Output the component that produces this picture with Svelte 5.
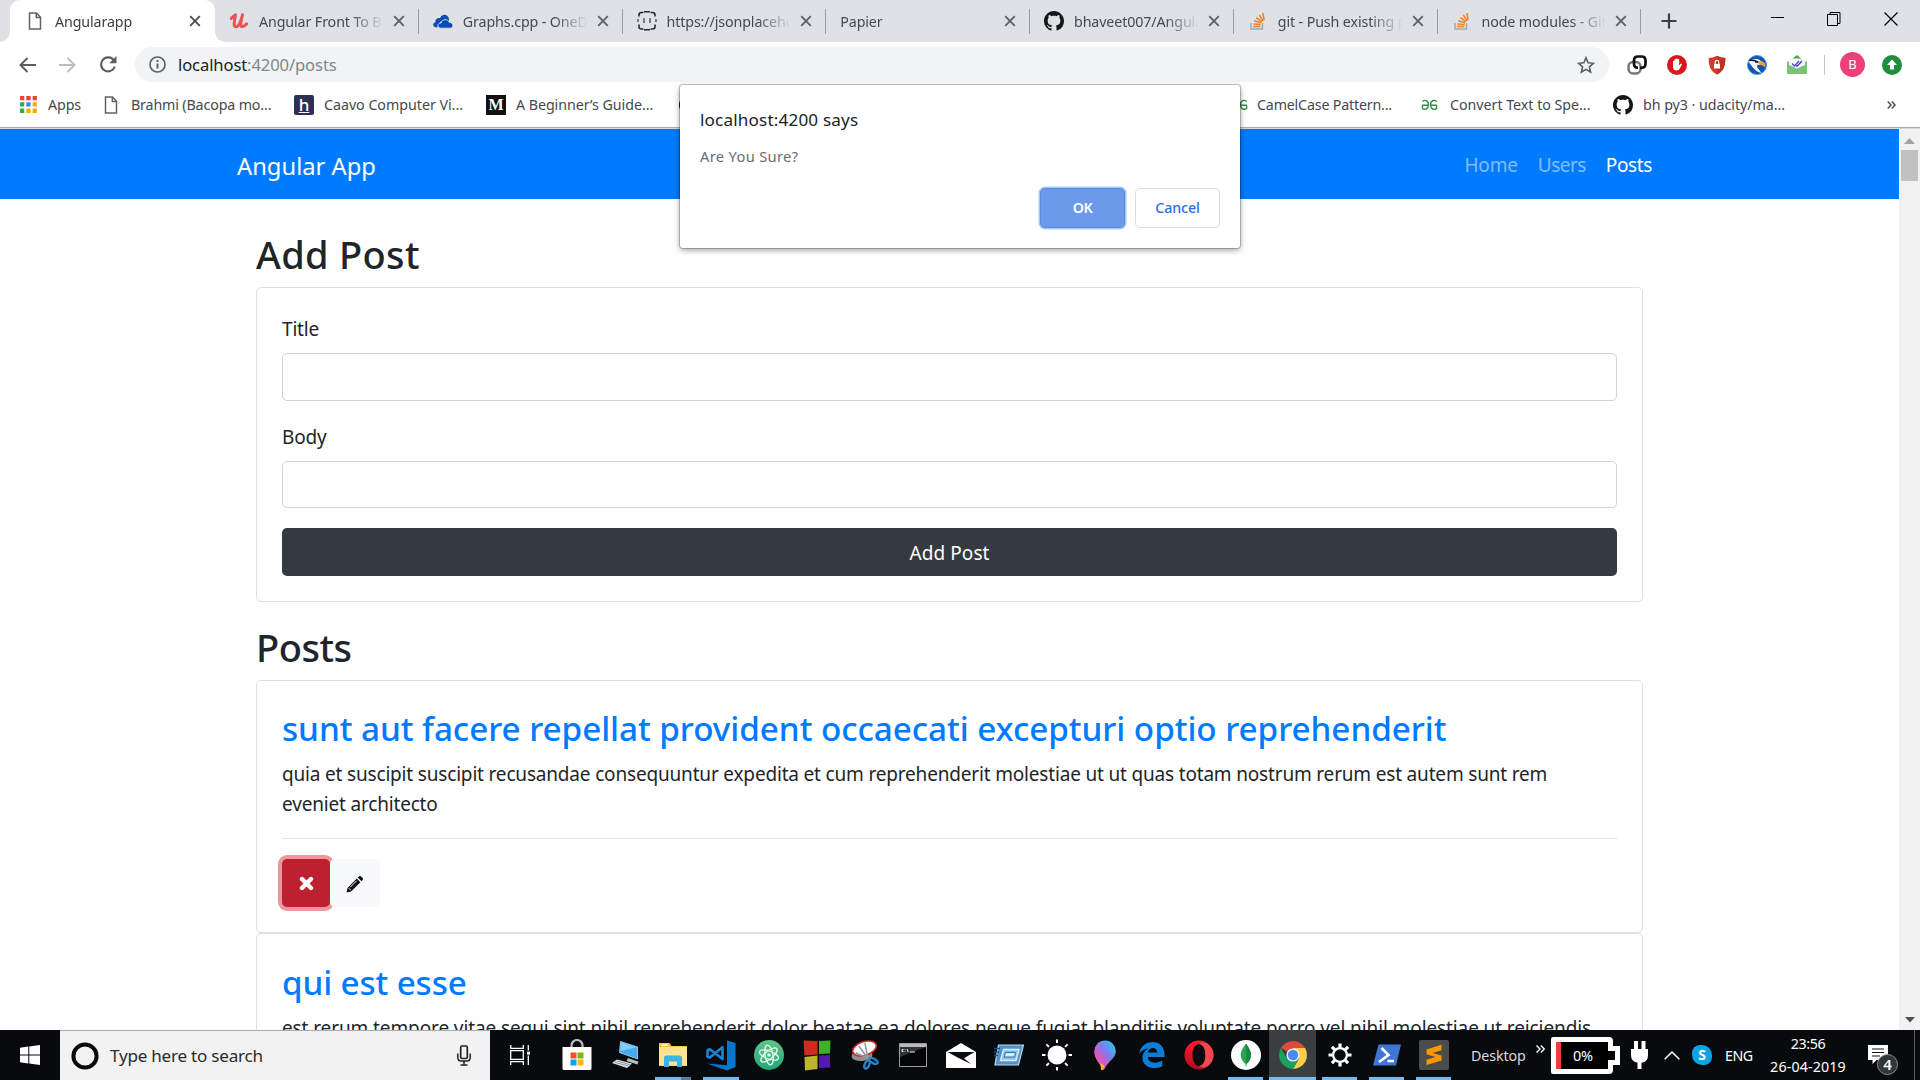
<script>
  const tabs = [
    { title: 'Angular Front To Back', icon: 'udemy' },
    { title: 'Graphs.cpp - OneDrive', icon: 'cloud' },
    { title: 'https://jsonplaceholder', icon: 'braces' },
    { title: 'Papier', icon: '' },
    { title: 'bhaveet007/Angular', icon: 'github' },
    { title: 'git - Push existing project', icon: 'stack' },
    { title: 'node modules - Git', icon: 'stack' }
  ];

  const posts = [
    {
      title: 'sunt aut facere repellat provident occaecati excepturi optio reprehenderit',
      body: 'quia et suscipit suscipit recusandae consequuntur expedita et cum reprehenderit molestiae ut ut quas totam nostrum rerum est autem sunt rem eveniet architecto'
    },
    {
      title: 'qui est esse',
      body: 'est rerum tempore vitae sequi sint nihil reprehenderit dolor beatae ea dolores neque fugiat blanditiis voluptate porro vel nihil molestiae ut reiciendis'
    }
  ];

  const apps = [
    { icon: 'store' }, { icon: 'pc' }, { icon: 'explorer', state: 'multi' }, { icon: 'vscode', state: 'open' },
    { icon: 'atom' }, { icon: 'blocks' }, { icon: 'snip' }, { icon: 'cmd' }, { icon: 'mail' }, { icon: 'run' },
    { icon: 'sun' }, { icon: 'paint' }
  ];
  const apps2 = [
    { icon: 'edge' }, { icon: 'opera' }, { icon: 'mongo', state: 'open' }, { icon: 'chrome', state: 'active' },
    { icon: 'gear', state: 'open' }, { icon: 'shell', state: 'open' }, { icon: 'sublime', state: 'open' }
  ];
</script>

{#snippet page()}
  <svg width="14" height="18" viewBox="0 0 14 18"><path d="M1.5 1h7l4 4.200V17h-11zM8.300 1v4.600h4.200" fill="#fff" stroke="#5f6368" stroke-width="1.5" /></svg>
{/snippet}

{#snippet cross(color)}
  <svg width="12" height="12" viewBox="0 0 12 12"><path d="M1.200 1.200l9.600 9.600M10.800 1.200l-9.600 9.600" stroke={color} stroke-width="1.900" /></svg>
{/snippet}

{#snippet github()}
  <svg width="20" height="20" viewBox="0 0 16 16"><path fill="#161614" d="M8 0C3.58 0 0 3.58 0 8c0 3.54 2.29 6.53 5.47 7.59.4.07.55-.17.55-.38 0-.19-.01-.82-.01-1.49-2.01.37-2.53-.49-2.69-.94-.09-.23-.48-.94-.82-1.13-.28-.15-.68-.52-.01-.53.63-.01 1.08.58 1.23.82.72 1.21 1.87.87 2.33.66.07-.52.28-.87.51-1.07-1.78-.2-3.64-.89-3.64-3.95 0-.87.31-1.59.82-2.15-.08-.2-.36-1.02.08-2.12 0 0 .67-.21 2.2.82.64-.18 1.32-.27 2-.27s1.36.09 2 .27c1.53-1.04 2.2-.82 2.2-.82.44 1.1.16 1.92.08 2.12.51.56.82 1.27.82 2.15 0 3.07-1.87 3.75-3.65 3.95.29.25.54.73.54 1.48 0 1.07-.01 1.93-.01 2.2 0 .21.15.46.55.38A8.01 8.01 0 0 0 16 8c0-4.42-3.58-8-8-8z" /></svg>
{/snippet}

{#snippet geeks()}
  <svg width="17" height="12" viewBox="0 0 17 12"><path d="M1 6.200h6.200M1.400 2.600C3.500.2 7.400 1.600 7.400 5.800c0 4-3.200 5.400-6 3.800V6.200M16 6.200H9.800M15.600 2.600C13.500.2 9.600 1.600 9.600 5.800c0 4 3.200 5.400 6 3.800V6.200" fill="none" stroke="#2f8d46" stroke-width="1.400" /></svg>
{/snippet}

{#snippet favicon(name)}
  {#if name === 'udemy'}
    <svg width="18" height="16" viewBox="0 0 18 16"><path d="M1 5.500C3 4 4.500 2.500 5.500 1.800 5 6 2.500 13.800 6 13.800c3.200 0 5-6 6.500-12-1 5-3.200 12-.5 12 1.800 0 3.600-1.600 4.800-3" fill="none" stroke="#ec5252" stroke-width="3" stroke-linecap="round" stroke-linejoin="round" /></svg>
  {:else if name === 'cloud'}
    <svg width="20" height="15" viewBox="0 0 20 15"><path d="M4 13.500C-.5 13.500-1 9.500 2.300 8.300 2.300 5 5 3.600 7 4.300 8.500-.5 14.500-.5 15.800 4.200l.2 3H8z" fill="#0a4dba" /><path d="M7.500 14.200c-4-.6-3.200-5.400.5-5.200C9 4.800 14.800 4.500 16.200 8.200c4.500.2 4.700 5.600 1.400 6z" fill="#0a4dba" stroke="#dee1e6" stroke-width=".9" /></svg>
  {:else if name === 'braces'}
    <svg width="20" height="22" viewBox="0 0 20 22"><path d="M6.500 2.500H4.500Q2 2.500 2 5v1.500M13.500 2.500h2q2.500 0 2.500 2.500v1.500M2 14.500V17q0 2 2.500 2h2M18 14.500V17q0 2-2.500 2h-2" fill="none" stroke="#2b2b2b" stroke-width="1.600" /><path d="M7 1.700h6M7 19.800h6" stroke="#2b2b2b" stroke-width="1.600" /><path d="M1 9v3M19 9v3M7 8v5M13 8v5" stroke="#444" stroke-width="1.300" /></svg>
  {:else if name === 'github'}
    {@render github()}
  {:else}
    <svg width="16" height="18" viewBox="0 0 16 18"><path d="M1 11v6h11.500v-6" fill="none" stroke="#a4adb5" stroke-width="1.600" /><path d="M3.200 14.600h7.200M3.400 11.900l7.200.7M4.200 8.800l6.900 2M6.300 5.600l5.800 4M9.300 3l3.800 5.800M12.700 1l1.500 7" stroke="#f48024" stroke-width="1.500" /></svg>
  {/if}
{/snippet}

{#snippet appIcon(name)}
  {#if name === 'store'}
    <svg width="30" height="32" viewBox="0 0 30 32"><path d="M9.500 9V6.500a5 5 0 0 1 11 0V9" fill="none" stroke="#b9bcbe" stroke-width="2.200" /><path d="M.5 8h29v21.500a1.500 1.500 0 0 1-1.500 1.500H2a1.500 1.500 0 0 1-1.500-1.500z" fill="#fff" /><path d="M8.500 13.500h6v6h-6z" fill="#f25022" /><path d="M15.500 13.500h6v6h-6z" fill="#7fba00" /><path d="M8.500 20.500h6v6h-6z" fill="#00a4ef" /><path d="M15.500 20.500h6v6h-6z" fill="#ffb900" /></svg>
  {:else if name === 'pc'}
    <svg width="28" height="28" viewBox="0 0 28 28"><path d="M9.500.500L26.500 6v12L8.500 11.500z" fill="#43abf2" stroke="#b8d8ee" stroke-width=".8" /><path d="M10 1.500L25.500 6.500 9.500 10z" fill="#83ccff" /><path d="M17 17l7 2.500 3.500 1-1 3-11-3.500z" fill="#b8bfc3" /><path d="M6 18.500l15 4-5 4.500L1 22z" fill="#dfe3e6" /><path d="M4 21.500l13 3.300M6 20l13.500 3.800" stroke="#8d979e" stroke-width="1" /></svg>
  {:else if name === 'explorer'}
    <svg width="28" height="26" viewBox="0 0 28 26"><path d="M0 1h10.500l2 3H28v20H0z" fill="#f5c544" /><path d="M0 5h28v18.500H0z" fill="#fde394" /><path d="M2.500 2.300h6v1.500h-6z" fill="#fff" /><path d="M5 25v-9q0-2.500 2.500-2.500h13q2.500 0 2.500 2.500v9h-5v-5.500h-8V25z" fill="#3cb4e5" /></svg>
  {:else if name === 'vscode'}
    <svg width="30" height="31" viewBox="0 0 30 31"><path d="M21 .500l8.500 2.500v24L21 30.500 1 23.500l20 1.700z" fill="#0078d0" /><path d="M16.500 7.200V19L3.800 9.300 1.500 10.300v6.500l2.300.8z" fill="none" stroke="#1786d8" stroke-width="2.600" stroke-linejoin="round" /></svg>
  {:else if name === 'atom'}
    <svg width="30" height="30" viewBox="0 0 30 30"><defs><linearGradient id="ag" x1="0" y1="0" x2="0" y2="1"><stop offset="0" stop-color="#62c389" /><stop offset="1" stop-color="#20a873" /></linearGradient></defs><circle cx="15" cy="15" r="15" fill="url(#ag)" /><g fill="none" stroke="#e6fff2" stroke-width="1.300"><ellipse cx="15" cy="15" rx="4" ry="10" transform="rotate(-10 15 15)" /><ellipse cx="15" cy="15" rx="4" ry="10" transform="rotate(50 15 15)" /><ellipse cx="15" cy="15" rx="4" ry="10" transform="rotate(110 15 15)" /></g><circle cx="15" cy="15" r="1.800" fill="#e6fff2" /></svg>
  {:else if name === 'blocks'}
    <svg width="28" height="31" viewBox="0 0 28 31"><path d="M.5.500l14 .5v13.500l-13 1z" fill="#d02b20" /><path d="M16 1l11.500-.5-.5 13-11 .5z" fill="#3fae2a" /><path d="M1.500 17l13-1.500V29L2 30.500z" fill="#bdb52c" /><path d="M16 15.500l11-.5v12.500L16 28z" fill="#5318b5" /></svg>
  {:else if name === 'snip'}
    <svg width="28" height="30" viewBox="0 0 28 30"><ellipse cx="11" cy="15.500" rx="10.500" ry="5.500" fill="#8d9194" transform="rotate(-5 11 15.500)" /><ellipse cx="13.500" cy="8.500" rx="12.200" ry="6.800" fill="#fff" stroke="#d7262b" stroke-width="1.600" transform="rotate(-18 13.500 8.500)" /><path d="M14 3l3 17M5 13l14 6M8 6l9 13" stroke="#8e979d" stroke-width="1.500" /><g fill="none" stroke="#2a82c5" stroke-width="2.400"><ellipse cx="16" cy="24.500" rx="2.200" ry="4.200" transform="rotate(25 16 24.500)" /><ellipse cx="22.500" cy="21" rx="2.200" ry="4.500" transform="rotate(-60 22.500 21)" /></g></svg>
  {:else if name === 'cmd'}
    <svg width="28" height="24" viewBox="0 0 28 24"><path d="M.5.500h27v23H.5z" fill="#050505" stroke="#9a9da0" /><path d="M1 1h26v3H1z" fill="#b9bcbe" /><path d="M1 4h26L1 14z" fill="#333" /><path d="M4.500 6.500H3v2h1.500M6 6.500v.6M6 8v.6M8 6l1.300 3M11 9h5" stroke="#eee" fill="none" /></svg>
  {:else if name === 'mail'}
    <svg width="30" height="25" viewBox="0 0 30 25"><path d="M0 9L15 0l15 9v16H0z" fill="#fff" /><path d="M1.500 9h27L18 15.200l7 5.800L13.500 15.500z" fill="#0a0e11" /></svg>
  {:else if name === 'run'}
    <svg width="30" height="22" viewBox="0 0 30 22"><path d="M4.500 1H29.500l-5 20H1z" fill="#4f93ca" stroke="#b9daf0" stroke-width="1.200" /><path d="M0 4.500h6M0 8h5M0 11.500h4" stroke="#1d4d78" stroke-width="1.500" /><path d="M9.500 5.500h15.500L22 16.500H6.500z" fill="#8ec0e5" stroke="#dceefa" stroke-width="1.400" /><path d="M11.500 8.500h10L20.500 13H10.300z" fill="#dcecf7" stroke="#2b6ea8" /></svg>
  {:else if name === 'sun'}
    <svg width="30" height="32" viewBox="0 0 30 32"><circle cx="15" cy="16" r="9.500" fill="#fff" /><path d="M15 .500v3.500M15 28v3.500M0 16h3.500M26.500 16H30M4.400 5.400l2.500 2.500M23.100 24.100l2.500 2.500M25.600 5.400l-2.500 2.500M6.900 24.100l-2.500 2.500" stroke="#fff" stroke-width="2" /></svg>
  {:else if name === 'paint'}
    <svg width="22" height="31" viewBox="0 0 22 31"><defs><linearGradient id="pg" x1="1" y1="0" x2="0" y2="1"><stop offset="0" stop-color="#15e0ec" /><stop offset=".4" stop-color="#7a7cf0" /><stop offset=".7" stop-color="#e455b8" /><stop offset="1" stop-color="#ffb030" /></linearGradient></defs><path d="M11 .500a10.800 10.800 0 0 1 10.800 11C21.800 18 14 22 11.500 27c-1 3.500-4 4-4 2.500C9 26 .2 20 .2 11.500A10.800 10.800 0 0 1 11 .500z" fill="url(#pg)" /><path d="M6.500 23l4 3c-1 3.500-3.500 5-3.500 3.500z" fill="#f8b62b" /></svg>
  {:else if name === 'edge'}
    <svg width="26" height="26" viewBox="0 0 26 26"><path d="M0 12C1.500 4 7 0 13.500 0 21 0 25.500 5.500 25.500 12v3H8.800c.4 6.500 9 7 14.500 3.600v5.600C15 28.500 3.500 25.500 3.500 16c0-4.500 2.500-8 6-9.500C5 6.800 1.800 9 0 12zM9 10.500h9.300C18 4.500 9.800 4.500 9 10.500z" fill="#0f7bd6" /></svg>
  {:else if name === 'opera'}
    <svg width="30" height="30" viewBox="0 0 30 30"><defs><linearGradient id="og" x1="0" y1="0" x2="0" y2="1"><stop offset="0" stop-color="#ff1b2d" /><stop offset="1" stop-color="#b10b1e" /></linearGradient></defs><path fill-rule="evenodd" d="M15 .500a14.500 14.500 0 1 1 0 29 14.500 14.500 0 0 1 0-29zM15 4c-4 0-6.500 5-6.500 11S11 26 15 26s6.500-5 6.500-11S19 4 15 4z" fill="url(#og)" /><path d="M15 26c4 0 6.500-5 6.500-11S19 4 15 4c2-1.800 6.500-2.200 10 1 6 5.500 6 14.500 0 20-3.500 3.200-8 2.800-10 1z" fill="#f04a50" /></svg>
  {:else if name === 'mongo'}
    <svg width="30" height="30" viewBox="0 0 30 30"><circle cx="15" cy="15" r="15" fill="#fff" /><path d="M15 3.500C11 9 9.500 12 9.800 16c.2 3.500 2.700 6 4.700 8v2.500h1V24c2.500-2 4.500-5 4.500-9 0-4-2-7-5-11.500z" fill="#2aa350" /><path d="M15 3.500c3 4.500 5 7.500 5 11.500 0 4-2 7-4.500 9z" fill="#178a42" /></svg>
  {:else if name === 'chrome'}
    <svg width="28" height="28" viewBox="0 0 28 28"><path d="M14 14L1.900 7A14 14 0 0 1 26.100 7z" fill="#dd4b3e" /><path d="M14 14V7h12.100A14 14 0 0 1 14 28l6-10.500z" fill="#ffcd46" /><path d="M14 14l6 3.500L14 28A14 14 0 0 1 1.900 7l6 10.500z" fill="#1da05f" /><circle cx="14" cy="14" r="6.600" fill="#f1f1f1" /><circle cx="14" cy="14" r="5.200" fill="#4a8af4" /></svg>
  {:else if name === 'gear'}
    <svg width="24" height="24" viewBox="0 0 24 24"><circle cx="12" cy="12" r="6.900" fill="none" stroke="#fff" stroke-width="2.300" /><path d="M12 .5v4M12 19.500v4M.5 12h4M19.500 12h4M3.900 3.900l2.800 2.800M17.300 17.300l2.800 2.800M20.100 3.900l-2.800 2.800M6.700 17.300l-2.800 2.800" stroke="#fff" stroke-width="3.200" /></svg>
  {:else if name === 'shell'}
    <svg width="28" height="22" viewBox="0 0 28 22"><path d="M5.500.500H28L23 21.500H0z" fill="#3f76d4" /><path d="M8.500 4l7 7-9.500 7M14.500 17h6.500" fill="none" stroke="#fff" stroke-width="2.600" /></svg>
  {:else if name === 'sublime'}
    <svg width="30" height="30" viewBox="0 0 30 30"><rect width="30" height="30" rx="2" fill="#4c4c4c" /><path d="M7.500 9.500l15-4.700v5.400l-9 2.800 9 2.500v5L7.500 25v-5.300l9-2.700-9-2.700z" fill="#ff9800" /></svg>
  {/if}
{/snippet}

{#snippet taskApp(app)}
  <div class="app {app.state ?? ''}">{@render appIcon(app.icon)}</div>
{/snippet}

<div class="screen">
  <header class="browser">
    <div class="tabstrip">
      <div class="tab current">
        <span class="fav first">{@render page()}</span>
        <span class="tab-title">Angularapp</span>
        <span class="tab-close">{@render cross('#4a4d51')}</span>
      </div>
      {#each tabs as tab}
        <div class="tab">
          {#if tab.icon}<span class="fav">{@render favicon(tab.icon)}</span>{/if}
          <span class="tab-title">{tab.title}</span>
          <span class="tab-close">{@render cross('#5f6368')}</span>
        </div>
      {/each}
      <div class="new-tab"><svg width="16" height="16" viewBox="0 0 16 16"><path d="M8 .5v15M.5 8h15" stroke="#3c4043" stroke-width="2.200" /></svg></div>
      <div class="window-buttons">
        <svg width="14" height="14" viewBox="0 0 14 14"><path d="M1 5.500h13" stroke="#000" /></svg>
        <svg width="14" height="14" viewBox="0 0 14 14"><path d="M.5 2.500h10v11H.5zM3 2.500v-2h10v11h-2.500" fill="none" stroke="#000" /></svg>
        <svg width="14" height="14" viewBox="0 0 14 14"><path d="M.5.500l13 13M13.500.500l-13 13" stroke="#000" stroke-width="1.200" /></svg>
      </div>
    </div>

    <div class="toolbar">
      <div class="nav-buttons">
        <svg width="17" height="16" viewBox="0 0 17 16"><path d="M17 8H2M8.500 1L1.500 8l7 7" fill="none" stroke="#5a5e62" stroke-width="2" /></svg>
        <svg width="17" height="16" viewBox="0 0 17 16"><path d="M0 8h15M8.500 1l7 7-7 7" fill="none" stroke="#bcbec0" stroke-width="2" /></svg>
        <svg width="18" height="17" viewBox="0 0 18 17"><path d="M15 4.500A7 7 0 1 0 15.800 10.500" fill="none" stroke="#5a5e62" stroke-width="2.100" /><path d="M17.500 0v7.300h-7.300z" fill="#5a5e62" /></svg>
      </div>
      <div class="omnibox">
        <svg width="17" height="17" viewBox="0 0 17 17"><circle cx="8.500" cy="8.500" r="7.500" fill="none" stroke="#5f6368" stroke-width="1.700" /><path d="M8.500 7.500v5M8.500 4v2" stroke="#5f6368" stroke-width="2" /></svg>
        <span class="url">localhost<i>:4200/posts</i></span>
        <svg class="star" width="18" height="18" viewBox="0 0 18 18"><path d="M9 1.800l2.100 5 5.400.5-4.100 3.600 1.200 5.300L9 13.400l-4.600 2.800 1.200-5.300-4.100-3.600 5.400-.5z" fill="none" stroke="#5a5e62" stroke-width="1.600" /></svg>
      </div>
      <div class="extensions">
        <svg width="20" height="20" viewBox="0 0 20 20"><rect x="1.500" y="7" width="12" height="11.500" rx="4.500" fill="none" stroke="#777" stroke-width="2.500" /><path d="M13 12.800h1.500q4 0 4-4V5.500q0-4-4-4h-3.500q-4 0-4 4v3.300q0 4 4 4" fill="none" stroke="#111" stroke-width="2.700" /></svg>
        <svg width="20" height="20" viewBox="0 0 20 20"><circle cx="10" cy="10" r="10" fill="#d8171e" /><path d="M6 11V6.200q.7-.8 1.400 0V9.500 4.500q.8-.8 1.600 0V9 3.800q.8-.8 1.600 0V9 4.500q.8-.8 1.600 0v6l1.500-1.800q1-.4 1.200.5l-2.200 4.500q-1 1.800-3 1.800Q6 15.500 6 12z" fill="#fff" /></svg>
        <svg width="20" height="20" viewBox="0 0 20 20"><path d="M10 .8C13 2.500 15.500 3 18.300 3c.2 8-2 13.500-8.300 16.500C3.700 16.500 1.500 11 1.700 3 4.500 3 7 2.500 10 .8z" fill="#d23c2a" /><path d="M10 .8C13 2.500 15.500 3 18.300 3c.2 8-2 13.500-8.300 16.500z" fill="#bd3324" /><path d="M7 9h6v4.500H7z" fill="#fff" /><path d="M8.200 9V7.200a1.800 1.800 0 0 1 3.600 0V9" fill="none" stroke="#fff" stroke-width="1.200" /></svg>
        <svg width="20" height="20" viewBox="0 0 20 20"><circle cx="10" cy="10" r="9.500" fill="#1553b4" stroke="#3b9be8" /><path d="M1.200 6.500Q5 3.500 10 4q3.500.5 4.500 3l-1 3-3-.3L10 12l4.500 6Q9 17 5.500 12z" fill="#f5f8fb" /><path d="M12 6.500q5-1 6.500 3.500l-.8 2.500Q16 9.500 11.500 9.500z" fill="#f6a623" /><path d="M2 5.500Q7 4.500 11.500 7.500M8 7h2.500" fill="none" stroke="#101c38" stroke-width="1.700" /></svg>
        <svg width="20" height="20" viewBox="0 0 20 20"><path d="M5 4l5-4 5 4z" fill="#4da64b" /><path d="M0 6.500h20V18q0 1-1 1H1q-1 0-1-1z" fill="#79c377" /><path d="M2 3.500h16V10l-8 3.500L2 10z" fill="#f7f7fb" /><path d="M5 8.500l2.500 2.500L12 6M9 10.500l1 .8L15 6" fill="none" stroke="#5448c8" stroke-width="1.400" /></svg>
      </div>
      <div class="profile">
        <span class="avatar">B</span>
        <svg width="20" height="20" viewBox="0 0 20 20"><circle cx="10" cy="10" r="10" fill="#1e8e3e" /><path d="M10 4.500l5 5.500h-3v4.500H8V10H5z" fill="#fff" /></svg>
      </div>
    </div>

    <div class="bookmarks">
      <div class="bm apps-link">
        <svg width="17" height="17" viewBox="0 0 17 17"><path d="M0 0h4.300v4.300H0zM6.300 0h4.300v4.300H6.300zM12.600 0h4.300v4.300h-4.300z" fill="#ea4335" /><path d="M0 6.300h4.300v4.300H0zM0 12.600h4.300v4.300H0z" fill="#34a853" /><path d="M6.300 6.300h4.300v4.300H6.300z" fill="#4285f4" /><path d="M12.600 6.300h4.300v4.300h-4.300zM6.300 12.600h4.300v4.300H6.300zM12.600 12.600h4.300v4.300h-4.300z" fill="#fbab05" /></svg>
        <span>Apps</span>
      </div>
      <div class="bm brahmi">{@render page()}<span>Brahmi (Bacopa mo...</span></div>
      <div class="bm caavo"><b class="tile navy">h</b><span>Caavo Computer Vi...</span></div>
      <div class="bm medium"><b class="tile black">M</b><span>A Beginner’s Guide...</span></div>
      <div class="bm hidden-mark">{@render github()}</div>
      <div class="bm camel">{@render geeks()}<span>CamelCase Pattern...</span></div>
      <div class="bm speech">{@render geeks()}<span>Convert Text to Spe...</span></div>
      <div class="bm udacity">{@render github()}<span>bh py3 · udacity/ma...</span></div>
      <svg class="more" width="9" height="8" viewBox="0 0 9 8"><path d="M.8.500L4 4 .8 7.500M4.800.500L8 4 4.800 7.500" fill="none" stroke="#4a4d51" stroke-width="1.500" /></svg>
    </div>
  </header>

  <div class="viewport">
    <main class="document">
      <nav class="navbar">
        <a class="brand">Angular App</a>
        <div class="links"><a>Home</a><a>Users</a><a class="here">Posts</a></div>
      </nav>

      <div class="container">
        <h2>Add Post</h2>
        <form class="card">
          <label for="title">Title</label>
          <input id="title" type="text" />
          <label for="body">Body</label>
          <input id="body" type="text" />
          <button type="button" class="submit">Add Post</button>
        </form>

        <h2 class="tight">Posts</h2>
        {#each posts as post}
          <article class="card">
            <h3>{post.title}</h3>
            <p>{post.body}</p>
            <hr />
            <div class="actions">
              <button class="delete" aria-label="Delete"><svg width="15" height="15" viewBox="0 0 15 15"><path d="M3 3l9 9M12 3l-9 9" stroke="#fff" stroke-width="4.400" stroke-linecap="round" /></svg></button>
              <button class="edit" aria-label="Edit"><svg width="18" height="18" viewBox="0 0 18 18"><path d="M11.800 2.600l3.600 3.600 1.400-1.400q.8-.8 0-1.600l-2-2q-.8-.8-1.600 0zM10.800 3.600L1.500 12.900.5 17.500l4.600-1 9.300-9.300z" fill="#111" /><path d="M2.800 13.200l2 2M10.600 5.800l-6.300 6.300" stroke="#f8f9fa" stroke-width="1" /></svg></button>
            </div>
          </article>
        {/each}
      </div>
    </main>
    <div class="scrollbar">
      <svg width="11" height="6" viewBox="0 0 11 6"><path d="M0 6L5.500 0 11 6z" fill="#a3a3a3" /></svg>
      <div class="thumb"></div>
      <svg class="down" width="10" height="6" viewBox="0 0 10 6"><path d="M0 0h10L5 5.500z" fill="#505050" /></svg>
    </div>
  </div>

  <footer class="taskbar">
    <div class="start"><svg width="20" height="20" viewBox="0 0 20 20"><path d="M0 2.800l8.300-1.200v8H0zM9.300 1.400L20 0v9.600H9.300zM0 10.500h8.300v8L0 17.300zM9.300 10.500H20V20L9.300 18.600z" fill="#fff" /></svg></div>
    <div class="search">
      <svg width="28" height="28" viewBox="0 0 28 28"><circle cx="14" cy="14" r="11.600" fill="none" stroke="#0a0a0a" stroke-width="4" /></svg>
      <span>Type here to search</span>
      <svg width="14" height="21" viewBox="0 0 14 21"><rect x="3.700" y="1" width="6.600" height="12.500" rx="1.500" fill="none" stroke="#222" stroke-width="1.700" /><path d="M.8 8.500v4q0 3.500 3.500 3.500h5.400q3.500 0 3.500-3.500v-4M7 16v4M3.500 20h7" fill="none" stroke="#222" stroke-width="1.500" /></svg>
    </div>
    <div class="task-view"><svg width="20" height="20" viewBox="0 0 20 20"><path d="M.7 0v3.300h12.600V0M.7 20v-3.300h12.600V20M.7 5.700h12.600v8.600H.7zM18.300 0v5.500M18.300 10.500V20" fill="none" stroke="#fff" stroke-width="1.300" /><path d="M17 6.700h3v3h-3z" fill="#fff" /></svg></div>
    <div class="pinned">
      {#each apps as app}{@render taskApp(app)}{/each}
    </div>
    <div class="pinned narrow">
      {#each apps2 as app}{@render taskApp(app)}{/each}
    </div>
    <div class="desktop-bar">
      <span>Desktop</span>
      <svg width="9" height="8" viewBox="0 0 9 8"><path d="M.5.500L4 4 .5 7.500M4.800.500L8.300 4 4.800 7.500" fill="none" stroke="#fff" stroke-width="1.400" /></svg>
    </div>
    <div class="battery"><div class="cell"><span class="charge"></span><span class="level">0%</span></div><div class="cap"></div></div>
    <svg class="plug" width="17" height="28" viewBox="0 0 17 28"><path d="M3 0h4v8h3.500V0h4v8H17v6q0 6-5 7.500h-1.500V28h-4v-6.500H5.500Q0 20 0 14V8h3z" fill="#fff" /></svg>
    <svg class="chevron" width="16" height="9" viewBox="0 0 16 9"><path d="M.7 8.300L8 1l7.300 7.300" fill="none" stroke="#fff" stroke-width="1.500" /></svg>
    <span class="skype"><b>S</b></span>
    <span class="lang">ENG</span>
    <div class="clock"><span class="time">23:56</span><span>26-04-2019</span></div>
    <div class="notify">
      <svg width="20" height="20" viewBox="0 0 20 20"><path d="M0 0h20v15H8.500L4.500 19v-4H0z" fill="#fff" /><path d="M4 4h12M4 7.500h12M4 11h8" stroke="#111" stroke-width="1.200" /></svg>
      <span class="count">4</span>
    </div>
    <div class="peek"></div>
  </footer>

  <div class="dialog" role="alertdialog">
    <div class="dialog-title">localhost:4200 says</div>
    <div class="dialog-text">Are You Sure?</div>
    <div class="dialog-buttons"><button class="ok">OK</button><button class="cancel">Cancel</button></div>
  </div>
</div>

<style>
  :global(body) { margin: 0; overflow: hidden; }
  * { box-sizing: border-box; }
  svg { display: block; flex: none; }
  button, input { font: inherit; letter-spacing: inherit; margin: 0; }

  .screen { position: relative; display: flex; flex-direction: column; width: 1920px; height: 1080px; overflow: hidden; background: #fff; font-family: "Noto Sans", "Open Sans", sans-serif; letter-spacing: -0.007em; }

  .browser { flex: none; height: 129px; border-bottom: 1px solid #d8d8d8; box-shadow: inset 0 -1px #a9abad; display: flex; flex-direction: column; }

  .tabstrip { display: flex; height: 42px; flex: none; background: #dee1e6; }
  .tab { display: flex; align-items: center; flex: none; width: 203.75px; height: 42px; padding: 0 14px; font-size: 14.25px; color: #45494d; }
  .tab:not(.current)::after { content: ''; width: 1px; height: 25px; flex: none; margin-right: -14px; background: #9a9da2; }
  .tab.current { position: relative; width: 205px; margin-left: 10px; padding: 0 14px 0 18px; background: #fff; border-radius: 10px 10px 0 0; color: #3c4043; }
  .tab.current::before { content: ''; position: absolute; left: -10px; bottom: 0; width: 10px; height: 10px; background: radial-gradient(circle at 0 0, transparent 9.5px, #fff 10px); }
  .tab.current::after { content: ''; position: absolute; right: -10px; bottom: 0; width: 10px; height: 10px; background: radial-gradient(circle at 100% 0, transparent 9.5px, #fff 10px); }
  .fav { display: flex; justify-content: center; width: 22px; margin: 0 9px 0 -1px; flex: none; }
  .fav.first { justify-content: flex-start; width: 27px; margin: 0; }
  .tab-title { flex: 1; min-width: 0; overflow: hidden; white-space: nowrap; -webkit-mask-image: linear-gradient(90deg, #000 calc(100% - 34px), transparent); mask-image: linear-gradient(90deg, #000 calc(100% - 34px), transparent); }
  .tab-close { flex: none; margin: 0 13px 0 9px; }
  .current .tab-close { margin-right: 0; }
  .new-tab { display: flex; align-items: center; margin-left: 20px; }
  .window-buttons { display: flex; gap: 43px; margin: 12px 22px 0 auto; }

  .toolbar { display: flex; align-items: center; height: 45px; padding: 0 18px 0 19px; flex: none; }
  .nav-buttons { display: flex; gap: 23px; width: 116px; align-items: center; }
  .omnibox { display: flex; align-items: center; flex: none; width: 1474px; height: 35px; padding: 0 14px; border-radius: 18px; background: #f1f3f4; }
  .url { flex: 1; margin-left: 12px; font-size: 16.6px; color: #202124; }
  .url i { font-style: normal; color: #80868b; }
  .extensions { display: flex; gap: 20px; margin-left: 17.5px; padding-right: 17.5px; border-right: 1px solid #c4c7ca; height: 20px; align-items: center; }
  .profile { display: flex; align-items: center; gap: 17px; margin-left: 15px; }
  .avatar { width: 25px; height: 25px; border-radius: 50%; background: #ec407a; color: #fff; font-size: 13px; line-height: 25px; text-align: center; }

  .bookmarks { display: flex; align-items: center; height: 35px; padding: 0 24px 0 20px; font-size: 14.25px; color: #45494d; }
  .bm { display: flex; align-items: center; flex: none; white-space: nowrap; }
  .apps-link { width: 84px; gap: 11px; }
  .brahmi { width: 190px; gap: 13px; letter-spacing: -0.01em; }
  .caavo { width: 192px; gap: 10px; letter-spacing: -0.002em; }
  .medium { width: 193px; gap: 10px; letter-spacing: -0.004em; }
  .hidden-mark { width: 552px; }
  .camel { width: 190px; gap: 9px; letter-spacing: -0.013em; }
  .speech { width: 192px; gap: 12px; letter-spacing: -0.002em; }
  .udacity { gap: 10px; letter-spacing: -0.003em; }
  .tile { width: 20px; height: 20px; color: #fff; text-align: center; line-height: 19px; letter-spacing: 0; }
  .navy { background: #2a3154; border-radius: 2px; font-size: 17px; text-decoration: underline; font-weight: 500; }
  .black { background: #12100e; font: 700 16px/20px "Liberation Serif", serif; }
  .more { margin-left: auto; }

  .viewport { display: flex; flex: 1; min-height: 0; overflow: hidden; }
  .document { flex: 1; overflow: hidden; color: #212529; font-size: 19px; line-height: 30px; letter-spacing: -0.009em; }
  .navbar { display: flex; align-items: center; justify-content: space-between; height: 70px; padding: 2px 247px 0 237px; background: #007bff; color: #fff; }
  .brand { font-size: 23.75px; letter-spacing: 0; padding-top: 2px; }
  .links { display: flex; gap: 20px; color: rgba(255, 255, 255, .5); letter-spacing: -0.008em; }
  .links a:nth-child(2) { letter-spacing: -0.028em; }
  .links .here { color: #fff; letter-spacing: -0.02em; }
  .container { width: 1387px; margin: 30px 0 0 256px; }
  h2 { margin: 0 0 10px; height: 48px; padding-top: 1px; font-size: 38px; line-height: 48px; font-weight: 500; letter-spacing: .008em; }
  .tight { letter-spacing: -0.013em; }
  .card { border: 1px solid #dfdfdf; border-radius: 5px; padding: 25px; }
  form.card { height: 314.5px; margin-bottom: 20.5px; }
  label { display: block; margin-bottom: 10px; height: 30px; padding-top: 1px; }
  input { display: block; width: 100%; height: 47.5px; margin-bottom: 20px; border: 1px solid #ced4da; border-radius: 5px; background: #fff; padding: 0 15px; }
  .submit { width: 100%; height: 47.5px; border: 0; border-radius: 5px; background: #343a40; color: #fff; padding: 2px 0 0; letter-spacing: .004em; }
  h3 { margin: 0 0 10px; height: 42px; padding-top: 1px; font-size: 33.25px; line-height: 42px; font-weight: 500; color: #007bff; white-space: nowrap; letter-spacing: -0.0014em; }
  article p { margin: 0; height: 60px; padding: 1px 20px 0 0; letter-spacing: -0.0093em; }
  article:last-child p { padding-top: 2px; letter-spacing: -0.0055em; }
  article:last-child h3 { padding-top: 2px; letter-spacing: -0.004em; }
  hr { margin: 20px 0; border: 0; border-top: 1px solid #e3e3e3; }
  .actions { display: flex; height: 48px; }
  .actions button { display: flex; align-items: center; justify-content: center; height: 47.5px; border: 0; border-radius: 5px; padding: 2px 0 0; }
  .delete { position: relative; width: 48px; background: #bd2130; box-shadow: 0 0 0 4px #ed969e; }
  .edit { position: relative; width: 50px; background: #f8f9fa; }

  .scrollbar { display: flex; flex-direction: column; align-items: center; width: 21px; background: #f1f1f1; padding: 9px 0 7px; }
  .thumb { width: 17px; height: 31px; margin-top: 6px; background: #c1c1c1; }
  .down { margin-top: auto; }

  .taskbar { display: flex; align-items: center; flex: none; height: 50px; background: #070b0e; color: #fff; font-size: 14.25px; }
  .start { display: flex; justify-content: center; width: 60px; }
  .search { display: flex; align-items: center; width: 430px; height: 50px; padding: 0 19px 0 11px; background: #f2f2f2; border-top: 1px solid #aaa; color: #2b2b2b; }
  .search span { flex: 1; margin-left: 11px; font-size: 17.1px; letter-spacing: -0.014em; }
  .task-view { display: flex; justify-content: center; width: 63px; padding-right: 3px; }
  .pinned { display: flex; height: 50px; }
  .narrow { margin-left: -1px; }
  .app { display: flex; align-items: center; justify-content: center; width: 48px; height: 50px; border: solid transparent; border-width: 0 6px; }
  .narrow .app { width: 47px; }
  .open { background: linear-gradient(#76b9ed, #76b9ed) 0 100% / 100% 3px no-repeat padding-box; }
  .multi { background: linear-gradient(90deg, #76b9ed 26px, #557f9f 26px) 0 100% / 100% 3px no-repeat padding-box; }
  .active { background: linear-gradient(#76b9ed, #76b9ed) 0 100% / 100% 3px no-repeat border-box, #3b3f41; }
  .desktop-bar { display: flex; width: 94px; padding-left: 14px; color: #d9dbdc; }
  .desktop-bar svg { margin: 0 0 0 10px; }
  .desktop-bar span { line-height: 20px; padding-top: 1px; }
  .battery { display: flex; align-items: center; width: 69px; height: 37px; }
  .cell { display: flex; width: 62px; height: 37px; border: 5px solid #fff; border-radius: 2px 4px 4px 2px; background: #000; }
  .charge { width: 5px; background: #f03c3c; }
  .level { flex: 1; padding-right: 3px; text-align: center; line-height: 26px; font-size: 14.5px; }
  .cap { width: 12px; height: 19px; margin-left: -5px; background: #000; border: 5px solid #fff; border-left: 0; }
  .plug { margin-left: 11px; }
  .chevron { margin-left: 16px; }
  .skype { width: 20px; height: 20px; margin-left: 12px; border-radius: 8px 10px; background: #0ba4e6; text-align: center; line-height: 20px; font-size: 14px; }
  .lang { width: 30px; margin-left: 13px; letter-spacing: -0.035em; }
  .clock { display: flex; flex-direction: column; align-items: center; width: 78px; margin-left: 14px; line-height: 23px; letter-spacing: .01em; }
  .time { letter-spacing: -0.025em; }
  .notify { position: relative; margin-left: 21px; width: 32px; height: 20px; }
  .count { position: absolute; left: 9px; top: 9px; width: 21px; height: 21px; border: 1px solid #8b8d8f; border-radius: 50%; background: #333638; text-align: center; line-height: 19px; font-size: 15px; font-weight: 600; }
  .peek { width: 1px; height: 50px; margin-left: auto; margin-right: 5px; background: #5a5e61; }

  .dialog { position: absolute; left: 680px; top: 85px; width: 560px; height: 163px; padding: 22px 20px; background: #fff; border-radius: 3px; box-shadow: 0 0 0 1px rgba(0, 0, 0, .2), 0 2px 6px rgba(0, 0, 0, .4); color: #202124; }
  .dialog-title { font-size: 17.1px; line-height: 26px; letter-spacing: .01em; }
  .dialog-text { margin-top: 12px; font-size: 14.7px; line-height: 22px; color: #6a6d71; letter-spacing: .022em; }
  .dialog-buttons { display: flex; justify-content: flex-end; gap: 10px; margin-top: 21px; }
  .dialog-buttons button { height: 40px; width: 85px; border-radius: 5px; font-size: 14.25px; font-weight: 500; padding: 0 0 1px; }
  .dialog-buttons .ok { border: 1px solid #568ce6; background: #6a9ae9; color: #fff; font-weight: 600; letter-spacing: -0.04em; box-shadow: 0 0 0 1.5px #a9c6f5; }
  .cancel { border: 1px solid #dadce0; background: #fff; color: #2a6fe0; }
</style>
